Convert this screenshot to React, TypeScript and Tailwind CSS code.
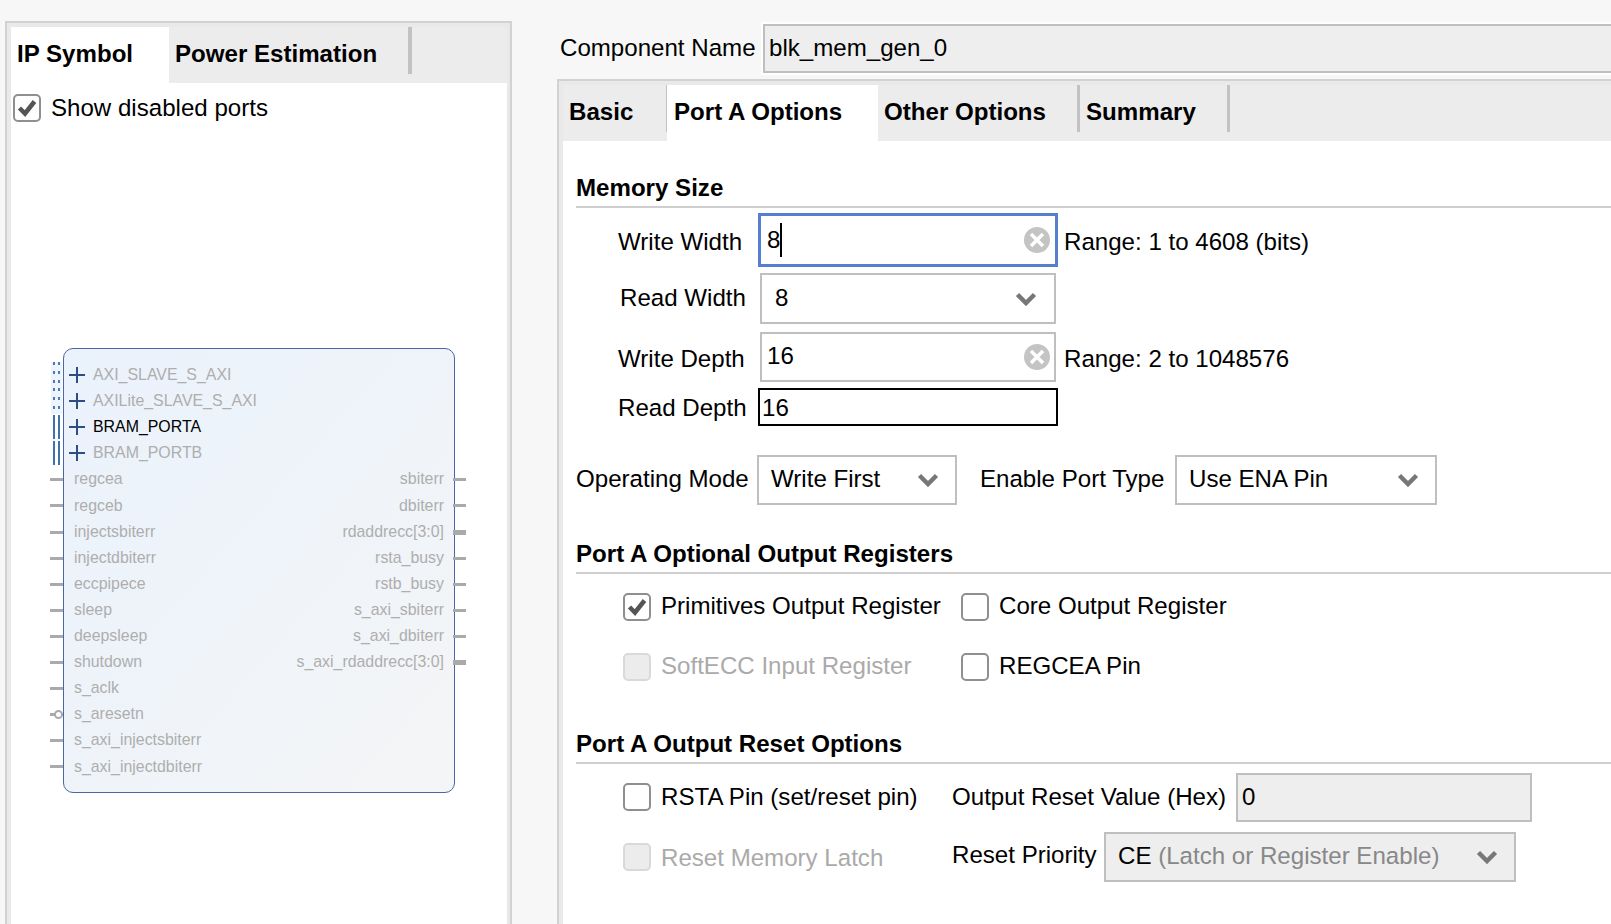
import React from "react";

const Plus = () => (
  <svg width="16" height="16" viewBox="0 0 16 16" className="shrink-0">
    <path d="M0 8H16M8 0V16" stroke="#2f4d85" strokeWidth="2" fill="none" />
  </svg>
);

const Check = () => (
  <svg width="24" height="24" viewBox="0 0 24 24" className="shrink-0">
    <path d="M4.5 12L10 17.5L19.5 5.5" stroke="#555555" strokeWidth="4.5" fill="none" />
  </svg>
);

const Box = ({ checked, disabled }: { checked?: boolean; disabled?: boolean }) => (
  <div
    className={
      disabled
        ? "w-[28px] h-[28px] shrink-0 rounded-[5px] border-2 border-[#d9d9d9] bg-[#ececec]"
        : "w-[28px] h-[28px] shrink-0 rounded-[5px] border-2 border-[#8f8f8f] bg-white flex items-center justify-center"
    }
  >
    {checked ? <Check /> : null}
  </div>
);

const Chevron = () => (
  <svg width="22" height="14" viewBox="0 0 22 14" className="shrink-0">
    <path d="M2.5 2.5L11 11L19.5 2.5" stroke="#777777" strokeWidth="4.5" fill="none" />
  </svg>
);

const Clear = () => (
  <svg width="26" height="26" viewBox="0 0 26 26" className="shrink-0">
    <circle cx="13" cy="13" r="13" fill="#c4c4c4" />
    <path d="M7 7L19 19M19 7L7 19" stroke="#ffffff" strokeWidth="3.5" fill="none" />
  </svg>
);

const Header = ({ children, mt }: { children: React.ReactNode; mt: string }) => (
  <div className={`ml-[13px] h-[39px] border-b-2 border-[#cfcfcf] flex items-center font-bold text-[24.1px] pt-[2px] ${mt}`}>
    {children}
  </div>
);

const busRows = [
  { name: "AXI_SLAVE_S_AXI", on: false, dotted: true },
  { name: "AXILite_SLAVE_S_AXI", on: false, dotted: true },
  { name: "BRAM_PORTA", on: true, dotted: false },
  { name: "BRAM_PORTB", on: false, dotted: false },
];

const portRows: { l: string; r?: string; thick?: boolean; inv?: boolean }[] = [
  { l: "regcea", r: "sbiterr" },
  { l: "regceb", r: "dbiterr" },
  { l: "injectsbiterr", r: "rdaddrecc[3:0]", thick: true },
  { l: "injectdbiterr", r: "rsta_busy" },
  { l: "eccpipece", r: "rstb_busy" },
  { l: "sleep", r: "s_axi_sbiterr" },
  { l: "deepsleep", r: "s_axi_dbiterr" },
  { l: "shutdown", r: "s_axi_rdaddrecc[3:0]", thick: true },
  { l: "s_aclk" },
  { l: "s_aresetn", inv: true },
  { l: "s_axi_injectsbiterr" },
  { l: "s_axi_injectdbiterr" },
];

const Symbol = () => (
  <div className="relative ml-[52px] mt-[215px] w-[392px] h-[445px] rounded-[10px] border border-[#4a66a3] pt-[13px] pl-[5px] pr-[10px] bg-gradient-to-br from-[#eaf2fc] to-[#f4f5f6] font-['Liberation_Sans',sans-serif] text-[15.9px] text-[#aeaeae]">
    {busRows.map((b) => (
      <div key={b.name} className="relative h-[26.1px] flex items-center gap-[8px]">
        {b.dotted ? (
          <div className="absolute left-[-18px] top-0 h-[26px] w-[11px] bg-[#eef4fb] flex justify-center gap-[3px]">
            <div className="w-[2px] h-full bg-[repeating-linear-gradient(to_bottom,#4f78ad_0,#4f78ad_3px,transparent_3px,transparent_9px)]" />
            <div className="w-[2px] h-full bg-[repeating-linear-gradient(to_bottom,#4f78ad_0,#4f78ad_3px,transparent_3px,transparent_9px)]" />
          </div>
        ) : (
          <div className="absolute left-[-16px] top-[1px] h-[24px] flex gap-[3px]">
            <div className="w-[2px] h-full bg-[#3f72ab]" />
            <div className="w-[2px] h-full bg-[#3f72ab]" />
          </div>
        )}
        <Plus />
        <span className={b.on ? "text-black" : ""}>{b.name}</span>
      </div>
    ))}
    {portRows.map((p) => (
      <div key={p.l} className="relative h-[26.1px] flex items-center justify-between pl-[5px]">
        <div className="absolute left-[-19px] top-[12px] h-[3px] w-[13px] bg-[#aaaaaa]" />
        {p.inv ? (
          <div className="absolute left-[-15px] top-[9px] h-[9px] w-[9px] rounded-full border-2 border-[#aaaaaa] bg-white" />
        ) : null}
        <span>{p.l}</span>
        {p.r ? <span>{p.r}</span> : null}
        {p.r ? (
          <div
            className={
              p.thick
                ? "absolute right-[-22px] top-[11px] h-[5px] w-[13px] bg-[#aaaaaa]"
                : "absolute right-[-22px] top-[12px] h-[3px] w-[13px] bg-[#aaaaaa]"
            }
          />
        ) : null}
      </div>
    ))}
  </div>
);

export default function App() {
  return (
    <div className="w-[1611px] h-[924px] overflow-hidden bg-[#f7f7f7] flex items-start whitespace-nowrap font-['Liberation_Sans',Arial,sans-serif] text-[24.1px] text-black">
      {/* Left panel */}
      <div className="ml-[5px] mt-[21px] w-[507px] h-[920px] shrink-0 border-2 border-[#d2d2d2] bg-[#e9e9e9] pt-[4px] pl-[4px] pr-[3px]">
        <div className="h-[56px] bg-[#ececec] flex items-stretch font-bold pb-[2px]">
          <div className="w-[158px] bg-white pl-[6px] flex items-center -mb-[2px] pb-[2px]">IP Symbol</div>
          <div className="w-[239px] pl-[6px] flex items-center">Power Estimation</div>
          <div className="w-[4px] h-[47px] bg-[#c2c2c2]" />
        </div>
        <div className="bg-white h-[860px]">
          <div className="flex items-center h-[50px] pl-[2px] gap-[10px]">
            <Box checked />
            <span>Show disabled ports</span>
          </div>
          <Symbol />
        </div>
      </div>

      {/* Right panel */}
      <div className="ml-[45px] w-[1100px] shrink-0">
        <div className="h-[79px] flex items-start pt-[24px] pl-[3px]">
          <div className="w-[203px] shrink-0 h-[49px] flex items-center">Component Name</div>
          <div className="w-[1000px] shrink-0 h-[49px] border-2 border-[#bfbfbf] bg-[#eeeeee] pl-[4px] flex items-center outline-2 outline-white">
            blk_mem_gen_0
          </div>
        </div>
        <div className="border-t-2 border-l-2 border-[#d2d2d2] bg-[#e9e9e9] pt-[4px] pl-[4px]">
          <div className="h-[56px] bg-[#ececec] flex items-stretch font-bold pb-[2px]">
            <div className="w-[103px] pl-[6px] flex items-center">Basic</div>
            <div className="w-[1px] h-[47px] bg-[#c2c2c2]" />
            <div className="w-[211px] bg-white pl-[7px] flex items-center -mb-[2px] pb-[2px]">Port A Options</div>
            <div className="w-[199px] pl-[6px] flex items-center">Other Options</div>
            <div className="w-[3px] h-[47px] bg-[#c2c2c2]" />
            <div className="w-[147px] pl-[6px] flex items-center">Summary</div>
            <div className="w-[3px] h-[47px] bg-[#c2c2c2]" />
          </div>

          <div className="bg-white h-[800px] overflow-hidden">
            <Header mt="mt-[28px]">Memory Size</Header>

            <div className="mt-[5px] h-[54px] flex items-center">
              <div className="ml-[55px] w-[140px] pt-[5px]">Write Width</div>
              <div className="w-[300px] h-[54px] border-[3px] border-[#5680cf] bg-white pl-[6px] pr-[5px] flex items-center justify-between">
                <div className="flex items-center">
                  <span>8</span>
                  <div className="w-[2px] h-[34px] bg-black" />
                </div>
                <Clear />
              </div>
              <div className="ml-[6px] pt-[5px]">Range: 1 to 4608 (bits)</div>
            </div>

            <div className="mt-[6px] h-[51px] flex items-center">
              <div className="ml-[57px] w-[140px]">Read Width</div>
              <div className="w-[296px] h-[51px] border-2 border-[#bfbfbf] bg-white pl-[13px] pr-[17px] flex items-center justify-between">
                <span>8</span>
                <Chevron />
              </div>
            </div>

            <div className="mt-[8px] h-[50px] flex items-center">
              <div className="ml-[55px] w-[142px] pt-[4px]">Write Depth</div>
              <div className="w-[296px] h-[50px] border-2 border-[#bfbfbf] bg-white pl-[5px] pr-[4px] flex items-center justify-between">
                <span className="pb-[2px]">16</span>
                <Clear />
              </div>
              <div className="ml-[8px] pt-[4px]">Range: 2 to 1048576</div>
            </div>

            <div className="mt-[6px] h-[38px] flex items-center">
              <div className="ml-[55px] w-[140px] pt-[3px]">Read Depth</div>
              <div className="w-[300px] h-[38px] border-2 border-black bg-white pl-[2px] pt-[3px] flex items-center">16</div>
            </div>

            <div className="mt-[29px] h-[50px] flex items-center">
              <div className="ml-[13px] w-[181px] pb-[2px]">Operating Mode</div>
              <div className="w-[200px] h-[50px] border-2 border-[#bfbfbf] bg-white pl-[12px] pr-[16px] flex items-center justify-between">
                <span className="pb-[2px]">Write First</span>
                <Chevron />
              </div>
              <div className="ml-[23px] w-[195px] pb-[2px]">Enable Port Type</div>
              <div className="w-[262px] h-[50px] border-2 border-[#bfbfbf] bg-white pl-[12px] pr-[16px] flex items-center justify-between">
                <span className="pb-[2px]">Use ENA Pin</span>
                <Chevron />
              </div>
            </div>

            <Header mt="mt-[30px]">Port A Optional Output Registers</Header>

            <div className="mt-[19px] h-[28px] flex items-center pl-[60px]">
              <div className="w-[338px] flex items-center gap-[10px]">
                <Box checked />
                <span className="pb-[2px]">Primitives Output Register</span>
              </div>
              <div className="flex items-center gap-[10px]">
                <Box />
                <span className="pb-[2px]">Core Output Register</span>
              </div>
            </div>

            <div className="mt-[32px] h-[28px] flex items-center pl-[60px]">
              <div className="w-[338px] flex items-center gap-[10px] text-[#aaaaaa]">
                <Box disabled />
                <span className="pb-[2px]">SoftECC Input Register</span>
              </div>
              <div className="flex items-center gap-[10px]">
                <Box />
                <span className="pb-[2px]">REGCEA Pin</span>
              </div>
            </div>

            <Header mt="mt-[44px]">Port A Output Reset Options</Header>

            <div className="mt-[9px] h-[49px] flex items-center pl-[60px]">
              <div className="w-[329px] flex items-center gap-[10px]">
                <Box />
                <span>RSTA Pin (set/reset pin)</span>
              </div>
              <div className="w-[284px]">Output Reset Value (Hex)</div>
              <div className="w-[296px] h-[49px] border-2 border-[#bfbfbf] bg-[#eeeeee] pl-[4px] flex items-center">0</div>
            </div>

            <div className="mt-[10px] h-[50px] flex items-center pl-[60px]">
              <div className="w-[329px] flex items-center gap-[10px] text-[#aaaaaa]">
                <Box disabled />
                <span className="pt-[3px]">Reset Memory Latch</span>
              </div>
              <div className="w-[152px] pb-[4px]">Reset Priority</div>
              <div className="w-[412px] h-[50px] border-2 border-[#bfbfbf] bg-[#eeeeee] pl-[12px] pr-[16px] flex items-center justify-between">
                <span className="pb-[2px]">
                  CE <span className="text-[#888888]">(Latch or Register Enable)</span>
                </span>
                <Chevron />
              </div>
            </div>
          </div>
        </div>
      </div>
    </div>
  );
}
